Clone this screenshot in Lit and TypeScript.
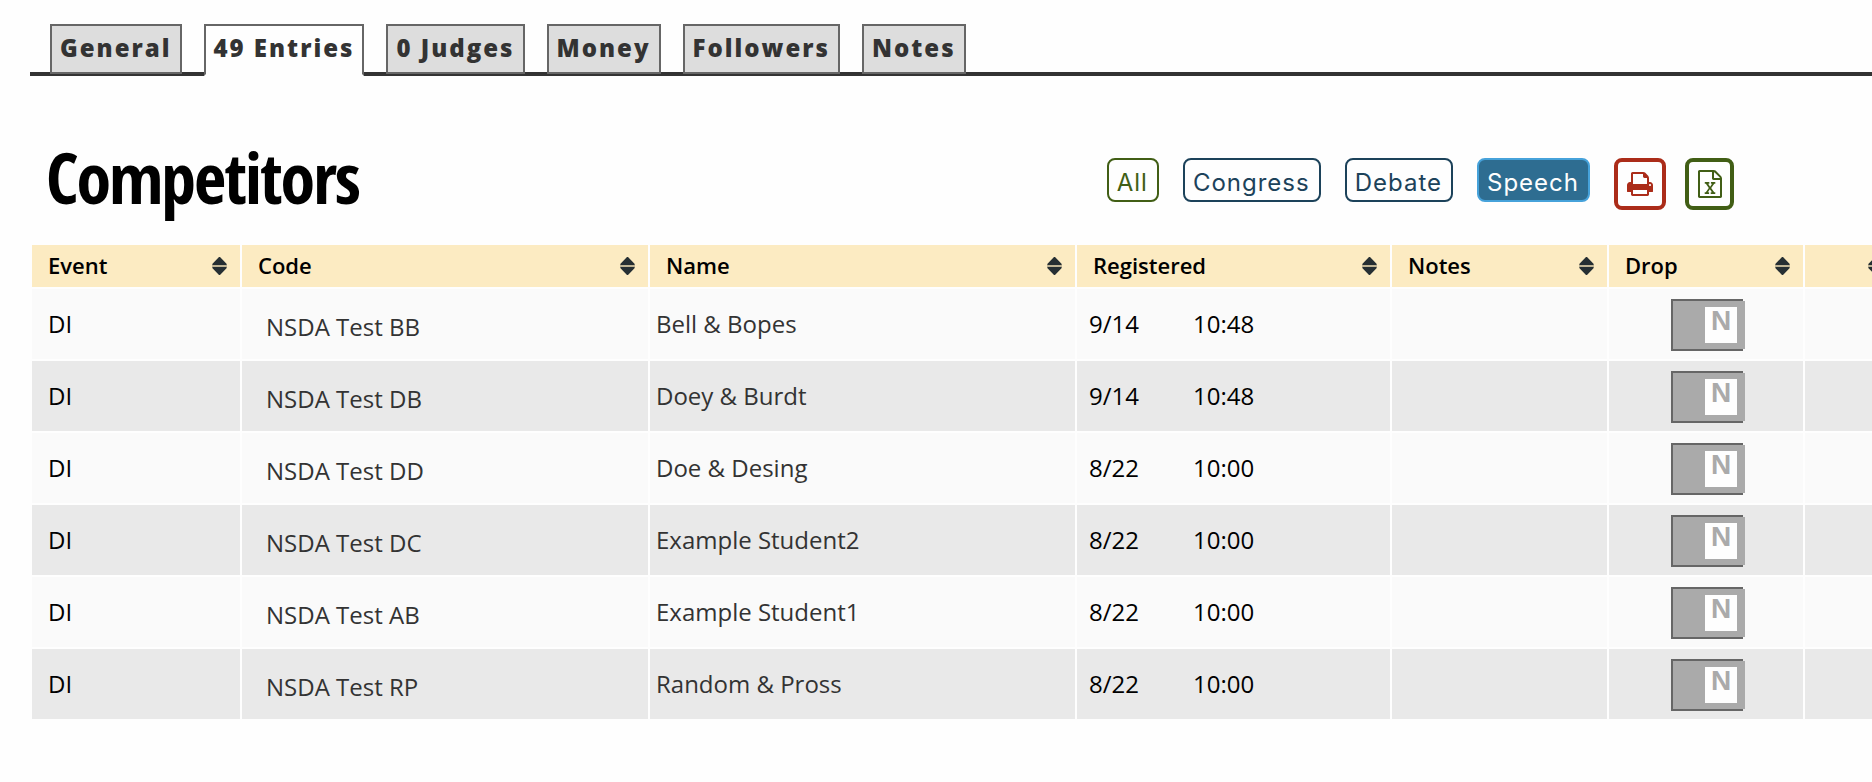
import { LitElement, html, css, svg } from "lit";
import { customElement, property, state } from "lit/decorators.js";
import { classMap } from "lit/directives/class-map.js";

interface Entry {
  event: string;
  code: string;
  name: string;
  date: string;
  time: string;
}

const TABS = ["General", "49 Entries", "0 Judges", "Money", "Followers", "Notes"];

const FILTERS = ["All", "Congress", "Debate", "Speech"];

const COLUMNS = [
  { key: "event", label: "Event" },
  { key: "code", label: "Code" },
  { key: "name", label: "Name" },
  { key: "registered", label: "Registered" },
  { key: "notes", label: "Notes" },
  { key: "drop", label: "Drop" },
  { key: "more", label: "" },
];

const ENTRIES: Entry[] = [
  { event: "DI", code: "NSDA Test BB", name: "Bell & Bopes", date: "9/14", time: "10:48" },
  { event: "DI", code: "NSDA Test DB", name: "Doey & Burdt", date: "9/14", time: "10:48" },
  { event: "DI", code: "NSDA Test DD", name: "Doe & Desing", date: "8/22", time: "10:00" },
  { event: "DI", code: "NSDA Test DC", name: "Example Student2", date: "8/22", time: "10:00" },
  { event: "DI", code: "NSDA Test AB", name: "Example Student1", date: "8/22", time: "10:00" },
  { event: "DI", code: "NSDA Test RP", name: "Random & Pross", date: "8/22", time: "10:00" },
];

const printIcon = svg`<path d="M384 1536h896v-256h-896v256zM384 896h896v-384h-160q-40 0-68-28t-28-68v-160h-640v640zM1536 960q0-26-19-45t-45-19-45 19-19 45 19 45 45 19 45-19 19-45zM1664 960v416q0 13-9.500 22.500t-22.500 9.500h-224v160q0 40-28 68t-68 28h-960q-40 0-68-28t-28-68v-160h-224q-13 0-22.500-9.500t-9.500-22.500v-416q0-79 56.500-135.500t135.500-56.500h64v-544q0-40 28-68t68-28h672q40 0 88 20t76 48l152 152q28 28 48 76t20 88v256h64q79 0 135.500 56.500t56.500 135.500z"/>`;

const sheetIcon = svg`<path d="M1468 380q28 28 48 76t20 88v1152q0 40-28 68t-68 28h-1344q-40 0-68-28t-28-68v-1600q0-40 28-68t68-28h896q40 0 88 20t76 48zM1024 136v376h376q-10-29-22-41l-313-313q-12-12-41-22zM1408 1664v-1024h-416q-40 0-68-28t-28-68v-416h-768v1536h1280zM429 1430v106h281v-106h-75l103-161q5-7 10-16.500t7.500-13.500 3.500-4h2q1 4 5 10 2 4 4.500 7.500t6 8 6.500 8.500l107 161h-76v106h291v-106h-68l-192-273 195-282h67v-107h-279v107h74l-103 159q-4 7-10 16.500t-9 13.500l-2 3h-2q-1-4-5-10-6-11-17-23l-106-159h76v-107h-290v107h68l189 272-194 283h-68z"/>`;

@customElement("drop-switch")
export class DropSwitch extends LitElement {
  @property() label = "";
  @property({ type: Boolean }) checked = false;

  static styles = css`
    :host {
      display: inline-block;
      vertical-align: middle;
    }
    .switch {
      display: block;
      position: relative;
      width: 72px;
      height: 52px;
      box-sizing: border-box;
      border: 2px solid #666;
      border-right: 0;
      cursor: pointer;
    }
    .box {
      position: absolute;
      inset: 0;
      width: 100%;
      height: 100%;
      margin: 0;
      opacity: 0;
      cursor: pointer;
    }
    .track {
      display: flex;
      justify-content: flex-end;
      width: 72px;
      height: 48px;
      box-sizing: border-box;
      padding: 6px 8px;
      background: #aaa;
    }
    .track.on {
      justify-content: flex-start;
    }
    .knob {
      width: 32px;
      height: 36px;
      background: #fefefe;
      color: #aaa;
      font: bold 28px/28px "Liberation Sans", Arial, sans-serif;
      text-align: center;
    }
  `;

  render() {
    return html`
      <label class="switch">
        <input
          class="box"
          type="checkbox"
          aria-label=${this.label}
          .checked=${this.checked}
          @change=${(e: Event) => (this.checked = (e.target as HTMLInputElement).checked)}
        />
        <span class=${classMap({ track: true, on: this.checked })}>
          <span class="knob">${this.checked ? "Y" : "N"}</span>
        </span>
      </label>
    `;
  }
}

@customElement("app-root")
export class AppRoot extends LitElement {
  @state() private tab = "49 Entries";
  @state() private filter = "Speech";

  static styles = css`
    :host {
      display: block;
      min-height: 100vh;
      overflow: hidden;
      background: #fefefe;
      color: #000;
      font: 24px/32px "Open Sans", "Noto Sans", sans-serif;
    }
    .tabs {
      display: flex;
      gap: 22px;
      margin-left: 30px;
      padding: 24px 20px 0;
      border-bottom: 4px solid #333;
    }
    .tab {
      box-sizing: border-box;
      height: 50px;
      margin-bottom: -2px;
      padding: 0 8px 2px;
      border: 2px solid #666;
      background: #ddd;
      color: #333;
      font-size: 24px;
      line-height: 44px;
      font-weight: 800;
      letter-spacing: 2px;
      text-decoration: none;
      white-space: nowrap;
    }
    .tab.active {
      height: 52px;
      margin-bottom: -4px;
      background: #fefefe;
      border-bottom-color: #fefefe;
    }
    .heading {
      display: flex;
      align-items: flex-start;
      justify-content: space-between;
      padding: 67px 138px 32px 46px;
    }
    .title {
      margin: 0;
      font-family: "Open Sans Condensed", "Open Sans", sans-serif;
      font-size: 70px;
      line-height: 68px;
      font-weight: 700;
      letter-spacing: -2px;
    }
    .actions {
      display: flex;
      align-items: flex-start;
      gap: 24px;
      padding-top: 15px;
    }
    .filter {
      box-sizing: border-box;
      height: 44px;
      padding: 5px 9px 0 8px;
      border: 2px solid #1c425a;
      border-radius: 8px;
      background: #fefefe;
      color: #1c425a;
      font: 24px/36px Inter, sans-serif;
      letter-spacing: 1px;
      cursor: pointer;
    }
    .filter.all {
      border-color: #415e15;
      color: #415e15;
    }
    .filter.current {
      border-color: #46a2da;
      background: #2e6d91;
      color: #fefefe;
    }
    .icon-button {
      display: flex;
      align-items: center;
      justify-content: center;
      box-sizing: border-box;
      height: 52px;
      padding: 0 8px;
      border: 4px solid currentColor;
      border-radius: 8px;
      background: #fefefe;
      cursor: pointer;
    }
    .icon-button svg {
      display: block;
      fill: currentColor;
    }
    .exports {
      display: flex;
      gap: 19px;
    }
    .print {
      width: 52px;
      color: #ab2c19;
    }
    .sheet {
      width: 49px;
      color: #415e15;
    }
    .entries {
      width: calc(100% - 4px);
      margin-left: 30px;
      table-layout: fixed;
      border-collapse: separate;
      border-spacing: 2px;
    }
    .c-event { width: 208px; }
    .c-code { width: 406px; }
    .c-registered { width: 313px; }
    .c-notes { width: 215px; }
    .c-drop { width: 194px; }
    .c-more { width: 91px; }
    .head {
      height: 42px;
      padding: 0;
      background: #fcebc2;
      text-align: left;
      font-weight: 600;
    }
    .sort {
      display: flex;
      align-items: center;
      justify-content: space-between;
      box-sizing: border-box;
      width: 100%;
      height: 42px;
      padding: 0 13px 2px 16px;
      border: 0;
      background: none;
      color: inherit;
      font: 600 22px/32px "Open Sans", "Noto Sans", sans-serif;
      cursor: pointer;
    }
    .arrows {
      display: block;
      margin-left: auto;
      margin-top: 2px;
    }
    .cell {
      height: 70px;
      padding: 0 12px 0 16px;
      box-sizing: border-box;
      background: #fafafa;
    }
    .row:nth-child(even) .cell {
      background: #e9e9e9;
    }
    .link {
      color: #333;
      text-decoration: none;
    }
    .cell.code {
      padding: 6px 12px 0 24px;
    }
    .cell.name {
      padding-left: 6px;
    }
    .cell.registered {
      padding-left: 12px;
    }
    .stamp {
      display: grid;
      grid-template-columns: 104px 1fr;
    }
    .cell.drop {
      padding: 2px 0 0 2px;
      text-align: center;
    }
  `;

  private renderHead(column: { key: string; label: string }) {
    return html`
      <th class="head" scope="col">
        <button class="sort" type="button" aria-label=${`Sort by ${column.label || "actions"}`}>
          ${column.label}
          <svg class="arrows" width="15" height="18" viewBox="0 0 15 18" aria-hidden="true">
            <path fill="#c0b596" d="M0 7h15v4H0z" />
            <path fill="#262f33" d="M7 0h1L14.500 6.800V8H.5V6.800zM.5 10h14v1.200L8 18H7L.5 11.200z" />
          </svg>
        </button>
      </th>
    `;
  }

  private renderEntry(entry: Entry) {
    return html`
      <tr class="row">
        <td class="cell">${entry.event}</td>
        <td class="cell code"><a class="link" href="#entry">${entry.code}</a></td>
        <td class="cell name"><a class="link" href="#entry">${entry.name}</a></td>
        <td class="cell registered">
          <div class="stamp"><span>${entry.date}</span><span>${entry.time}</span></div>
        </td>
        <td class="cell"></td>
        <td class="cell drop"><drop-switch label=${`Drop ${entry.code}`}></drop-switch></td>
        <td class="cell"></td>
      </tr>
    `;
  }

  render() {
    return html`
      <nav class="tabs">
        ${TABS.map(
          (name) => html`<a
            class=${classMap({ tab: true, active: name === this.tab })}
            href="#"
            @click=${() => (this.tab = name)}
            >${name}</a
          >`
        )}
      </nav>
      <header class="heading">
        <h1 class="title">Competitors</h1>
        <div class="actions">
          ${FILTERS.map(
            (name) => html`<button
              type="button"
              class=${classMap({
                filter: true,
                all: name === "All",
                current: name === this.filter,
              })}
              @click=${() => (this.filter = name)}
            >${name}</button>`
          )}
          <div class="exports">
            <button type="button" class="icon-button print" aria-label="Print">
              <svg width="26" height="24" viewBox="0 128 1664 1536" aria-hidden="true">${printIcon}</svg>
            </button>
            <button type="button" class="icon-button sheet" aria-label="Export spreadsheet">
              <svg width="24" height="28" viewBox="0 0 1536 1792" aria-hidden="true">${sheetIcon}</svg>
            </button>
          </div>
        </div>
      </header>
      <table class="entries">
        <colgroup>
          ${COLUMNS.map((c) => html`<col class=${`c-${c.key}`} />`)}
        </colgroup>
        <thead>
          <tr>${COLUMNS.map((c) => this.renderHead(c))}</tr>
        </thead>
        <tbody>
          ${ENTRIES.map((e) => this.renderEntry(e))}
        </tbody>
      </table>
    `;
  }
}
